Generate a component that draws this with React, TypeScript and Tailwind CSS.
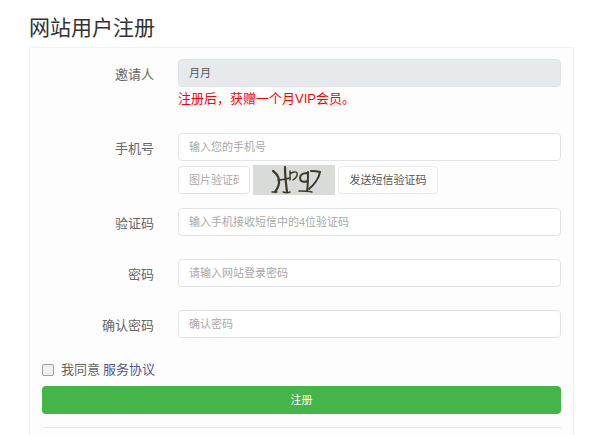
const inputClass =
  "block w-full h-[28px] px-[10px] text-[11px] text-[#555] bg-white border border-[#e2e3e6] rounded-[4px] outline-none placeholder:text-[#a8a8a8]";
const labelClass = "w-[112px] h-[28px] shrink-0 text-right text-[13px] leading-[32px] text-[#666]";

function Row({
  label,
  placeholder,
  className,
}: {
  label: string;
  placeholder: string;
  className: string;
}) {
  return (
    <div className={`flex ${className}`}>
      <label className={labelClass}>{label}</label>
      <div className="ml-[24px] flex-1">
        <input className={inputClass} placeholder={placeholder} />
      </div>
    </div>
  );
}

function Captcha() {
  return (
    <div className="w-[82px] h-[30px] -my-[1px] ml-[3px] bg-[#d8dbd8] shrink-0">
      <svg width="82" height="30" viewBox="0 0 82 30" fill="none" stroke="#3d3a28" strokeLinecap="round">
        <path d="M20 6c6 4 9 12 2 21" strokeWidth="2.2" />
        <path d="M32 2c0 8 1 17 2 25" strokeWidth="2.2" />
        <path d="M25 15c4 0 8-1 12-2" strokeWidth="1.5" />
        <path d="M30 27c3 1 5 1 7 0M19 27l5 0" strokeWidth="1.5" />
        <path d="M37 6v9M37 9c2-2 6-3 7-1 1 3-1 5-4 7" strokeWidth="1.4" />
        <path d="M54 8c-4 0-7 2-7 5s3 5 8 3M55 7c0 7 0 14-1 19" strokeWidth="2" />
        <path d="M46 26c4 0 9 0 13 1" strokeWidth="1.5" />
        <path d="M58 6c3 0 6 0 9 1-1 6-6 13-11 17" strokeWidth="2" />
      </svg>
    </div>
  );
}

export default function App() {
  return (
    <div className="w-[600px] h-[435px] overflow-hidden bg-white font-['Liberation_Sans','Noto_Sans_CJK_SC',sans-serif]">
      <div className="pl-[29px] pr-[26px]">
        <h1 className="h-[47px] pt-[12px] text-[21px] leading-[32px] text-[#333]">网站用户注册</h1>
        <div className="h-[420px] border border-[#f2f2f2] rounded-[2px] bg-[#fdfdfd] px-[12px] pt-[11px]">
          <div className="flex">
            <label className={labelClass}>邀请人</label>
            <div className="ml-[24px] flex-1">
              <div className="h-[28px] px-[10px] text-[11px] leading-[26px] text-[#555] bg-[#e7eaed] border border-[#e2e3e6] rounded-[4px]">
                月月
              </div>
              <p className="mt-[3px] text-[13px] leading-[18px] text-[#ff0000]">注册后，获赠一个月VIP会员。</p>
            </div>
          </div>

          <div className="flex mt-[25px]">
            <label className={labelClass}>手机号</label>
            <div className="ml-[24px] flex-1">
              <input className={inputClass} placeholder="输入您的手机号" />
              <div className="flex items-center mt-[5px]">
                <input
                  className="block w-[72px] h-[28px] px-[10px] text-[11px] bg-white border border-[#e2e3e6] rounded-[4px] outline-none placeholder:text-[#a8a8a8]"
                  placeholder="图片验证码"
                />
                <Captcha />
                <button className="ml-[3px] w-[100px] h-[28px] text-[11px] text-[#555] bg-white border border-[#eaeaea] rounded-[4px]">
                  发送短信验证码
                </button>
              </div>
            </div>
          </div>

          <Row label="验证码" placeholder="输入手机接收短信中的4位验证码" className="mt-[14px]" />
          <Row label="密码" placeholder="请输入网站登录密码" className="mt-[23px]" />
          <Row label="确认密码" placeholder="确认密码" className="mt-[23px]" />

          <div className="flex items-center mt-[23px] h-[18px] text-[13px] text-[#666]">
            <input type="checkbox" className="w-[12px] h-[12px] m-0 appearance-none bg-[#efefef] border border-[#a0a0a0] rounded-[2px]" />
            <span className="ml-[7px]">我同意</span>
            <a className="ml-[3px] text-[#55558f]">服务协议</a>
          </div>

          <button className="block w-full h-[28px] mt-[7px] text-[11px] text-white bg-[#43b549] rounded-[4px]">注册</button>
          <hr className="mt-[13px] border-t border-[#e8e8e8]" />
        </div>
      </div>
    </div>
  );
}
